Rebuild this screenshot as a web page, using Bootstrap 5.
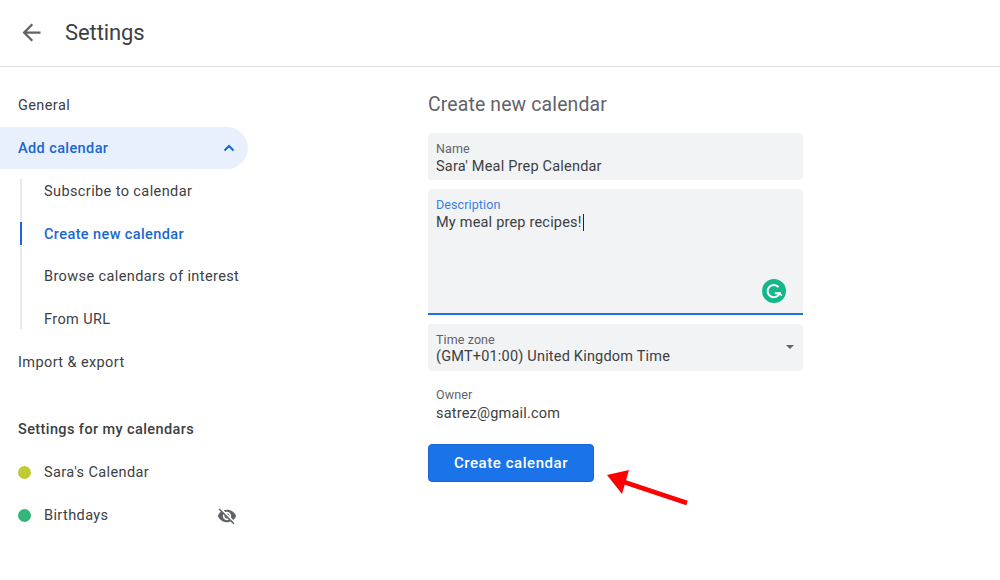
<!DOCTYPE html>
<html>
  <head>
    <title>Settings</title>
    <link
      href="https://cdn.jsdelivr.net/npm/bootstrap@5.3.0/dist/css/bootstrap.min.css"
      rel="stylesheet"
    />
    <style>
      body {
        font-family: Roboto, "Liberation Sans", sans-serif;
        color: #3c4043;
        background: #fff;
        font-size: 14.5px;
        letter-spacing: 0.2px;
      }

      .top-bar {
        height: 67px;
        border-bottom: 1px solid #dadce0;
        padding-left: 18px;
        padding-bottom: 2px;
      }

      .top-title {
        font-size: 22px;
        margin-left: 20px;
        letter-spacing: -0.1px;
      }

      .side-col {
        width: 248px;
        padding-top: 17px;
        letter-spacing: 0.4px;
      }

      .side-row {
        height: 42.7px;
        padding-left: 18px;
        padding-right: 11px;
        padding-top: 2px;
      }

      .side-row.is-open {
        background: #e8f0fe;
        color: #1967d2;
        font-weight: 500;
        border-radius: 0 22px 22px 0;
      }

      .open-chevron {
        margin-top: -3px;
        margin-right: 1px;
      }

      .sub-list {
        position: relative;
        margin-left: 20px;
      }

      .sub-list::before {
        content: "";
        position: absolute;
        left: 0;
        top: 10px;
        bottom: 11px;
        width: 2px;
        background: #e8eaed;
      }

      .sub-row {
        height: 42.7px;
        padding-left: 24px;
        padding-top: 2px;
      }

      .sub-row.is-current {
        color: #1967d2;
        font-weight: 500;
        position: relative;
      }

      .sub-row.is-current::before {
        content: "";
        position: absolute;
        left: 0;
        top: 10px;
        bottom: 10px;
        width: 2px;
        background: #1967d2;
      }

      .group-title {
        margin-top: 25px;
        font-weight: 500;
      }

      .cal-dot {
        width: 13px;
        height: 13px;
        border-radius: 50%;
        margin-right: 13px;
      }

      .main-col {
        margin-left: 180px;
        width: 375px;
        padding-top: 25px;
      }

      .page-title {
        font-size: 19.4px;
        color: #5f6368;
        line-height: 26px;
        margin-bottom: 15px;
        letter-spacing: 0.15px;
      }

      .field-box {
        background: #f1f3f4;
        border-radius: 4px;
        padding: 8px 8px 0;
        height: 47px;
        margin-bottom: 9px;
      }

      .field-box.is-focus {
        height: 126px;
        border-radius: 4px 4px 0 0;
        border-bottom: 2px solid #1a73e8;
      }

      .field-label {
        font-size: 12.5px;
        line-height: 15px;
        color: #5f6368;
        letter-spacing: 0.1px;
      }

      .field-box.is-focus .field-label {
        color: #3b7fe0;
      }

      .field-value {
        line-height: 19px;
        font-size: 14.5px;
        padding-top: 0.5px;
      }

      .zone-value {
        margin-top: -1px;
      }

      .text-caret {
        border-right: 1px solid #202124;
        padding-right: 1px;
      }

      .drop-caret {
        border-left: 4.5px solid transparent;
        border-right: 4.5px solid transparent;
        border-top: 4.5px solid #5f6368;
        position: absolute;
        right: 9px;
        top: 21px;
      }

      .g-badge {
        position: absolute;
        right: 17px;
        bottom: 10px;
      }

      .owner-block {
        padding: 16px 8px 0;
        height: 73px;
      }

      .owner-block .field-value {
        padding-top: 1.5px;
      }

      .create-btn {
        width: 166px;
        height: 38px;
        background: #1a73e8;
        border: 1px solid #1967d2;
        border-radius: 4px;
        color: #fff;
        font-size: 15px;
        font-weight: 500;
        letter-spacing: 0.55px;
        padding: 0;
      }

      .create-btn:hover {
        background: #1967d2;
        color: #fff;
      }

      .note-arrow {
        position: absolute;
        left: 172px;
        top: 21px;
      }
    </style>
  </head>
  <body>
    <header class="top-bar d-flex align-items-center">
      <svg width="27" height="27" viewBox="0 0 24 24" fill="#5f6368">
        <path d="M20 11H7.83l5.59-5.59L12 4l-8 8 8 8 1.41-1.41L7.83 13H20v-2z" />
      </svg>
      <div class="top-title">Settings</div>
    </header>

    <div class="d-flex">
      <nav class="side-col">
        <div class="side-row d-flex align-items-center">General</div>
        <div class="side-row is-open d-flex align-items-center justify-content-between">
          <span>Add calendar</span>
          <svg class="open-chevron" width="14" height="14" viewBox="0 0 14 14" fill="none" stroke="#1967d2" stroke-width="2">
            <path d="M2.5 9.5 7 5l4.5 4.5" />
          </svg>
        </div>
        <div class="sub-list">
          <div class="sub-row d-flex align-items-center">Subscribe to calendar</div>
          <div class="sub-row is-current d-flex align-items-center">Create new calendar</div>
          <div class="sub-row d-flex align-items-center">Browse calendars of interest</div>
          <div class="sub-row d-flex align-items-center">From URL</div>
        </div>
        <div class="side-row d-flex align-items-center">Import &amp; export</div>
        <div class="side-row group-title d-flex align-items-center">Settings for my calendars</div>
        <div class="side-row d-flex align-items-center">
          <span class="cal-dot" style="background: #c0ca33"></span>Sara's Calendar
        </div>
        <div class="side-row d-flex align-items-center justify-content-between">
          <span class="d-flex align-items-center">
            <span class="cal-dot" style="background: #33b679"></span>Birthdays
          </span>
          <svg width="20" height="20" viewBox="0 0 24 24" fill="#5f6368">
            <path d="M12 7c2.76 0 5 2.24 5 5 0 .65-.13 1.26-.36 1.83l2.92 2.92c1.51-1.26 2.7-2.89 3.43-4.75-1.73-4.39-6-7.5-11-7.5-1.4 0-2.74.25-3.98.7l2.16 2.16C10.74 7.13 11.35 7 12 7zM2 4.27l2.28 2.28.46.46C3.08 8.3 1.78 10.02 1 12c1.73 4.39 6 7.5 11 7.5 1.55 0 3.03-.3 4.38-.84l.42.42L19.73 22 21 20.73 3.27 3 2 4.27zM7.53 9.8l1.55 1.55c-.05.21-.08.43-.08.65 0 1.66 1.34 3 3 3 .22 0 .44-.03.65-.08l1.55 1.55c-.67.33-1.41.53-2.2.53-2.76 0-5-2.24-5-5 0-.79.2-1.53.53-2.2zm4.31-.78l3.15 3.15.02-.16c0-1.66-1.34-3-3-3l-.17.01z" />
          </svg>
        </div>
      </nav>

      <main class="main-col">
        <div class="page-title">Create new calendar</div>

        <div class="field-box">
          <div class="field-label">Name</div>
          <div class="field-value">Sara' Meal Prep Calendar</div>
        </div>

        <div class="field-box is-focus position-relative">
          <div class="field-label">Description</div>
          <div class="field-value"><span class="text-caret">My meal prep recipes!</span></div>
          <svg class="g-badge" width="24" height="24" viewBox="0 0 24 24" fill="none">
            <circle cx="12" cy="12" r="12" fill="#15b68c" />
            <path d="M16.6 8.2A6.2 6.2 0 1 0 17.6 14.2H12.8" stroke="#fff" stroke-width="2" />
            <path d="M15 17.8l2.6-3.6 2.2 2.6" stroke="#fff" stroke-width="1.4" />
          </svg>
        </div>

        <div class="field-box position-relative mb-0">
          <div class="field-label">Time zone</div>
          <div class="field-value zone-value">(GMT+01:00) United Kingdom Time</div>
          <span class="drop-caret"></span>
        </div>

        <div class="owner-block">
          <div class="field-label">Owner</div>
          <div class="field-value">satrez@gmail.com</div>
        </div>

        <div class="position-relative">
          <button type="button" class="btn create-btn">Create calendar</button>
          <svg class="note-arrow" width="90" height="42" viewBox="0 0 90 42" fill="none">
            <path d="M7 10 29 5 22 29z" fill="#f00" />
            <path d="M21 16 87 38" stroke="#f00" stroke-width="4.5" />
          </svg>
        </div>
      </main>
    </div>

    <script src="https://cdn.jsdelivr.net/npm/bootstrap@5.3.0/dist/js/bootstrap.bundle.min.js"></script>
  </body>
</html>
